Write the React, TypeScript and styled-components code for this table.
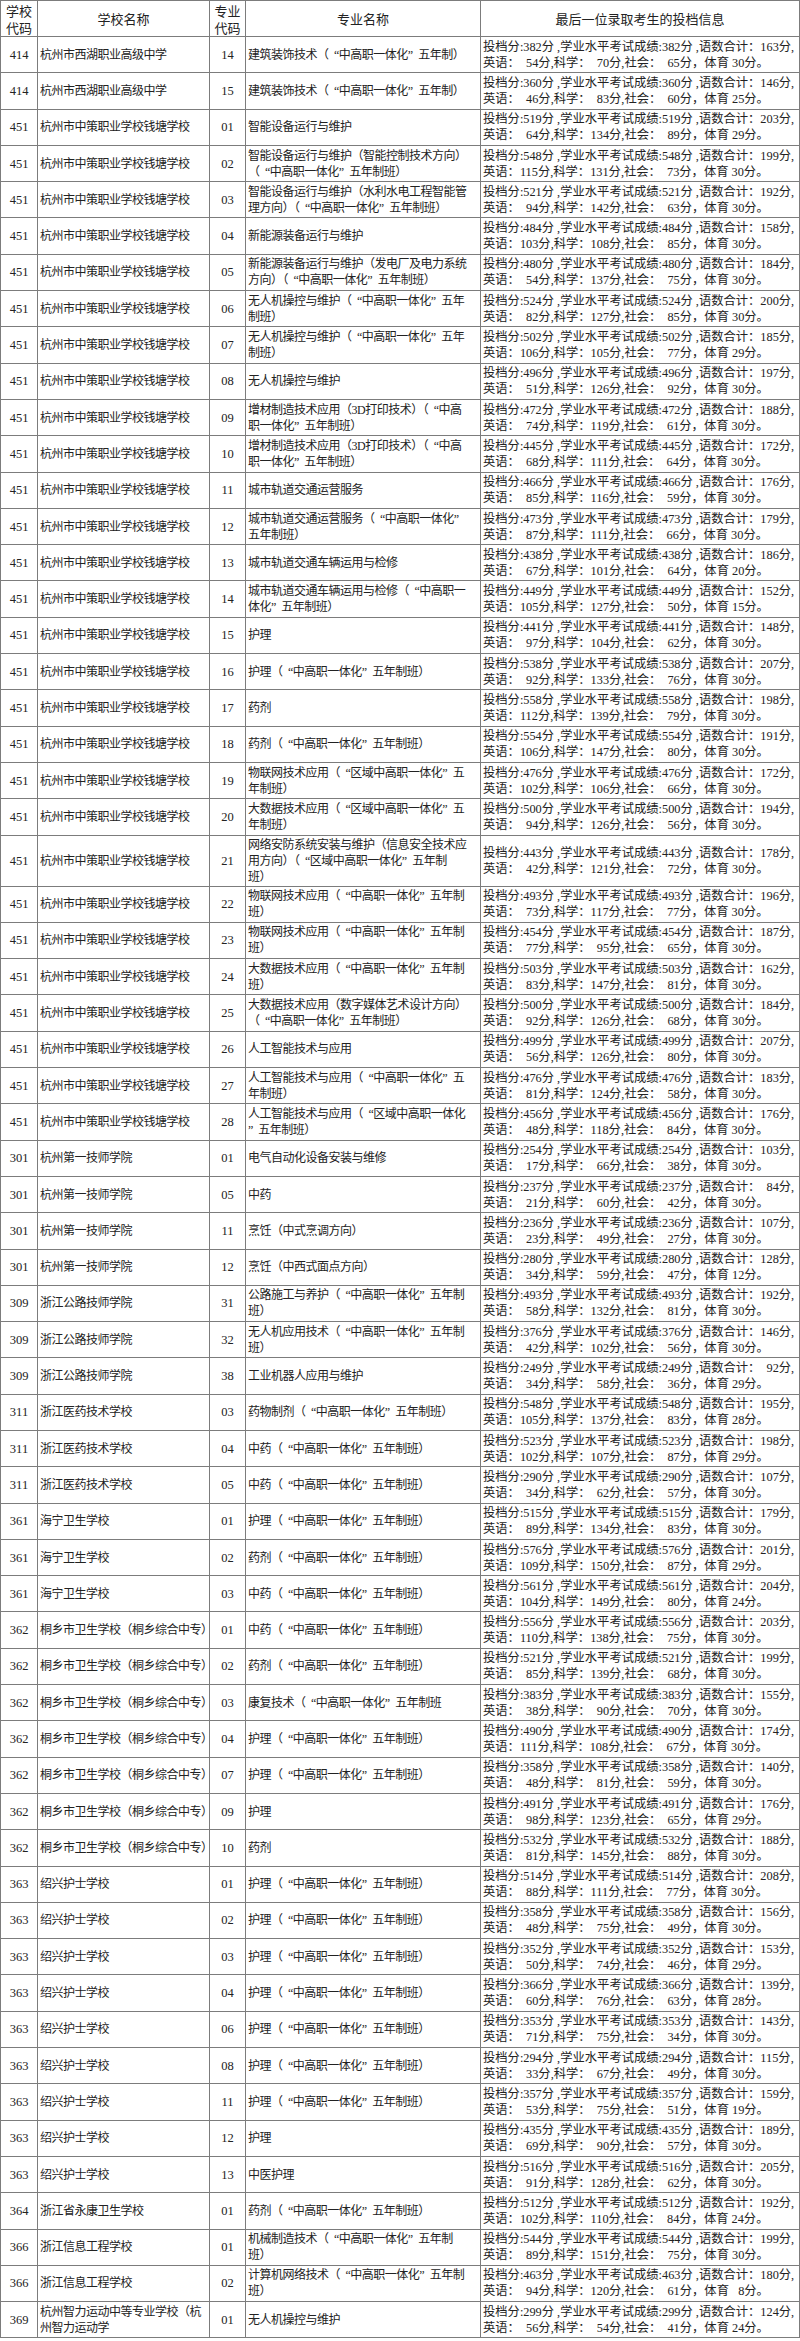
import React from "react";
import styled, { createGlobalStyle } from "styled-components";

const GlobalStyle = createGlobalStyle`
  html, body {
    margin: 0;
    padding: 0;
    background: #fff;
  }
  body {
    width: 800px;
    overflow-x: hidden;
  }
`;

const BODY_FONT = `"Liberation Serif", "Noto Sans CJK SC", serif`;
const HEAD_FONT = `"Noto Sans CJK SC", "Noto Sans", sans-serif`;
const LINE = "#7c7c7c";

const Sheet = styled.table`
  width: 800px;
  table-layout: fixed;
  border-collapse: collapse;
  color: #222;
  font-family: ${BODY_FONT};
  font-size: 12px;
`;

const HeadRow = styled.tr`
  height: 36px;
`;

const HeadCell = styled.th`
  border: 1px solid ${LINE};
  padding: 0;
  font-family: ${HEAD_FONT};
  font-size: 13px;
  font-weight: 400;
  line-height: 17px;
  text-align: center;
  vertical-align: middle;
  white-space: pre-line;
`;

const Row = styled.tr`
  height: 36.3px;
`;

const CodeCell = styled.td`
  border: 1px solid ${LINE};
  padding: 0;
  text-align: center;
  vertical-align: middle;
  font-size: 12.5px;
  line-height: 16px;
`;

const TextCell = styled.td`
  border: 1px solid ${LINE};
  padding: 1px 2px;
  text-align: left;
  vertical-align: middle;
  line-height: 16px;
  letter-spacing: -0.5px;
  white-space: pre-line;
`;

const ScoreCell = styled.td`
  border: 1px solid ${LINE};
  padding: 1px 0 1px 2px;
  vertical-align: middle;
  overflow: hidden;
`;

const ScoreLine = styled.div`
  white-space: pre;
  line-height: 16px;
  font-size: 12.3px;
`;

const SCHOOLS: Record<string, string> = {
  "414": "杭州市西湖职业高级中学",
  "451": "杭州市中策职业学校钱塘学校",
  "301": "杭州第一技师学院",
  "309": "浙江公路技师学院",
  "311": "浙江医药技术学校",
  "361": "海宁卫生学校",
  "362": "桐乡市卫生学校（桐乡综合中专）",
  "363": "绍兴护士学校",
  "364": "浙江省永康卫生学校",
  "366": "浙江信息工程学校",
  "369": "杭州智力运动中等专业学校（杭\n州智力运动学",
};

const ZG = "（“中高职一体化”五年制班）";

// [school, major code, major name, total, 语数, 英语, 科学, 社会, 体育]
type Entry = [string, string, string, number, number, number, number, number, number];

const rows: Entry[] = [
  ["414", "14", "建筑装饰技术（“中高职一体化”五年制）", 382, 163, 54, 70, 65, 30],
  ["414", "15", "建筑装饰技术（“中高职一体化”五年制）", 360, 146, 46, 83, 60, 25],
  ["451", "01", "智能设备运行与维护", 519, 203, 64, 134, 89, 29],
  ["451", "02", "智能设备运行与维护（智能控制技术方向）\n" + ZG, 548, 199, 115, 131, 73, 30],
  ["451", "03", "智能设备运行与维护（水利水电工程智能管\n理方向）" + ZG, 521, 192, 94, 142, 63, 30],
  ["451", "04", "新能源装备运行与维护", 484, 158, 103, 108, 85, 30],
  ["451", "05", "新能源装备运行与维护（发电厂及电力系统\n方向）" + ZG, 480, 184, 54, 137, 75, 30],
  ["451", "06", "无人机操控与维护（“中高职一体化”五年\n制班）", 524, 200, 82, 127, 85, 30],
  ["451", "07", "无人机操控与维护（“中高职一体化”五年\n制班）", 502, 185, 106, 105, 77, 29],
  ["451", "08", "无人机操控与维护", 496, 197, 51, 126, 92, 30],
  ["451", "09", "增材制造技术应用（3D打印技术）（“中高\n职一体化”五年制班）", 472, 188, 74, 119, 61, 30],
  ["451", "10", "增材制造技术应用（3D打印技术）（“中高\n职一体化”五年制班）", 445, 172, 68, 111, 64, 30],
  ["451", "11", "城市轨道交通运营服务", 466, 176, 85, 116, 59, 30],
  ["451", "12", "城市轨道交通运营服务（“中高职一体化”\n五年制班）", 473, 179, 87, 111, 66, 30],
  ["451", "13", "城市轨道交通车辆运用与检修", 438, 186, 67, 101, 64, 20],
  ["451", "14", "城市轨道交通车辆运用与检修（“中高职一\n体化”五年制班）", 449, 152, 105, 127, 50, 15],
  ["451", "15", "护理", 441, 148, 97, 104, 62, 30],
  ["451", "16", "护理" + ZG, 538, 207, 92, 133, 76, 30],
  ["451", "17", "药剂", 558, 198, 112, 139, 79, 30],
  ["451", "18", "药剂" + ZG, 554, 191, 106, 147, 80, 30],
  ["451", "19", "物联网技术应用（“区域中高职一体化”五\n年制班）", 476, 172, 102, 106, 66, 30],
  ["451", "20", "大数据技术应用（“区域中高职一体化”五\n年制班）", 500, 194, 94, 126, 56, 30],
  ["451", "21", "网络安防系统安装与维护（信息安全技术应\n用方向）（“区域中高职一体化”五年制\n班）", 443, 178, 42, 121, 72, 30],
  ["451", "22", "物联网技术应用（“中高职一体化”五年制\n班）", 493, 196, 73, 117, 77, 30],
  ["451", "23", "物联网技术应用（“中高职一体化”五年制\n班）", 454, 187, 77, 95, 65, 30],
  ["451", "24", "大数据技术应用（“中高职一体化”五年制\n班）", 503, 162, 83, 147, 81, 30],
  ["451", "25", "大数据技术应用（数字媒体艺术设计方向）\n" + ZG, 500, 184, 92, 126, 68, 30],
  ["451", "26", "人工智能技术与应用", 499, 207, 56, 126, 80, 30],
  ["451", "27", "人工智能技术与应用（“中高职一体化”五\n年制班）", 476, 183, 81, 124, 58, 30],
  ["451", "28", "人工智能技术与应用（“区域中高职一体化\n”五年制班）", 456, 176, 48, 118, 84, 30],
  ["301", "01", "电气自动化设备安装与维修", 254, 103, 17, 66, 38, 30],
  ["301", "05", "中药", 237, 84, 21, 60, 42, 30],
  ["301", "11", "烹饪（中式烹调方向）", 236, 107, 23, 49, 27, 30],
  ["301", "12", "烹饪（中西式面点方向）", 280, 128, 34, 59, 47, 12],
  ["309", "31", "公路施工与养护（“中高职一体化”五年制\n班）", 493, 192, 58, 132, 81, 30],
  ["309", "32", "无人机应用技术（“中高职一体化”五年制\n班）", 376, 146, 42, 102, 56, 30],
  ["309", "38", "工业机器人应用与维护", 249, 92, 34, 58, 36, 29],
  ["311", "03", "药物制剂" + ZG, 548, 195, 105, 137, 83, 28],
  ["311", "04", "中药" + ZG, 523, 198, 102, 107, 87, 29],
  ["311", "05", "中药" + ZG, 290, 107, 34, 62, 57, 30],
  ["361", "01", "护理" + ZG, 515, 179, 89, 134, 83, 30],
  ["361", "02", "药剂" + ZG, 576, 201, 109, 150, 87, 29],
  ["361", "03", "中药" + ZG, 561, 204, 104, 149, 80, 24],
  ["362", "01", "中药" + ZG, 556, 203, 110, 138, 75, 30],
  ["362", "02", "药剂" + ZG, 521, 199, 85, 139, 68, 30],
  ["362", "03", "康复技术（“中高职一体化”五年制班", 383, 155, 38, 90, 70, 30],
  ["362", "04", "护理" + ZG, 490, 174, 111, 108, 67, 30],
  ["362", "07", "护理" + ZG, 358, 140, 48, 81, 59, 30],
  ["362", "09", "护理", 491, 176, 98, 123, 65, 29],
  ["362", "10", "药剂", 532, 188, 81, 145, 88, 30],
  ["363", "01", "护理" + ZG, 514, 208, 88, 111, 77, 30],
  ["363", "02", "护理" + ZG, 358, 156, 48, 75, 49, 30],
  ["363", "03", "护理" + ZG, 352, 153, 50, 74, 46, 29],
  ["363", "04", "护理" + ZG, 366, 139, 60, 76, 63, 28],
  ["363", "06", "护理" + ZG, 353, 143, 71, 75, 34, 30],
  ["363", "08", "护理" + ZG, 294, 115, 33, 67, 49, 30],
  ["363", "11", "护理" + ZG, 357, 159, 53, 75, 51, 19],
  ["363", "12", "护理", 435, 189, 69, 90, 57, 30],
  ["363", "13", "中医护理", 516, 205, 91, 128, 62, 30],
  ["364", "01", "药剂" + ZG, 512, 192, 102, 110, 84, 24],
  ["366", "01", "机械制造技术（“中高职一体化”五年制\n班）", 544, 199, 89, 151, 75, 30],
  ["366", "02", "计算机网络技术（“中高职一体化”五年制\n班）", 463, 180, 94, 120, 61, 8],
  ["369", "01", "无人机操控与维护", 299, 124, 56, 54, 41, 24],
];

// two spaces in Liberation Serif are as wide as one digit
const pad = (n: number, width = 3) => {
  const s = String(n);
  return "  ".repeat(Math.max(0, width - s.length)) + s;
};

// the sheet uses full-width curly quotes; widen the narrow Latin ones a little
const widenQuotes = (s: string) => s.replace(/“/g, "\u2002“").replace(/”/g, "”\u2002");

const ScoreInfo = ({ r }: { r: Entry }) => {
  const [, , , total, yushu, en, sci, soc, pe] = r;
  return (
    <>
      <ScoreLine>{`投档分:${total}分 ,学业水平考试成绩:${total}分 ,语数合计：${pad(yushu)}分,`}</ScoreLine>
      <ScoreLine>{`英语：${pad(en)}分,科学：${pad(sci)}分,社会：${pad(soc)}分，体育 ${pad(pe, 2)}分。`}</ScoreLine>
    </>
  );
};

export default function App() {
  return (
    <>
      <GlobalStyle />
      <Sheet>
        <colgroup>
          <col style={{ width: 37 }} />
          <col style={{ width: 172 }} />
          <col style={{ width: 36 }} />
          <col style={{ width: 235 }} />
          <col />
        </colgroup>
        <thead>
          <HeadRow>
            <HeadCell>{"学校\n代码"}</HeadCell>
            <HeadCell>学校名称</HeadCell>
            <HeadCell>{"专业\n代码"}</HeadCell>
            <HeadCell>专业名称</HeadCell>
            <HeadCell>最后一位录取考生的投档信息</HeadCell>
          </HeadRow>
        </thead>
        <tbody>
          {rows.map((r, i) => (
            <Row key={i}>
              <CodeCell>{r[0]}</CodeCell>
              <TextCell>{SCHOOLS[r[0]]}</TextCell>
              <CodeCell>{r[1]}</CodeCell>
              <TextCell>{widenQuotes(r[2])}</TextCell>
              <ScoreCell>
                <ScoreInfo r={r} />
              </ScoreCell>
            </Row>
          ))}
        </tbody>
      </Sheet>
    </>
  );
}
